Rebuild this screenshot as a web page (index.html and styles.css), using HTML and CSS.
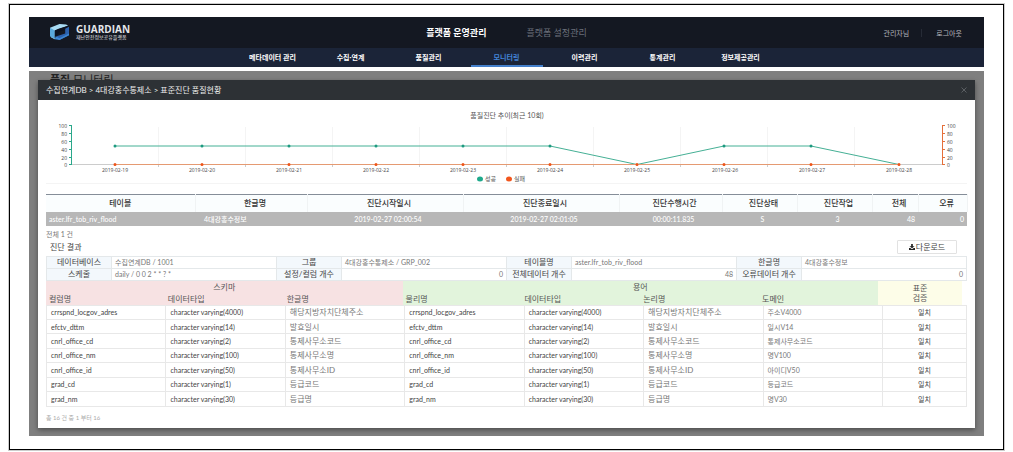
FILE: index.html
```html
<!DOCTYPE html>
<html lang="ko">
<head>
<meta charset="utf-8">
<title>GUARDIAN 품질 모니터링</title>
<link rel="stylesheet" href="styles.css">
</head>
<body>
<div class="frame">
  <header class="top">
    <a class="brand" href="#">
      <svg class="logo" viewBox="0 0 22 20" aria-hidden="true">
        <path d="M1 5 11 1 18 1.500 20 3 10 6 6 8 6 17 2 15Z" fill="#a9dcf5"/>
        <path d="M1 5 6 8 6 17 1 14Z" fill="#5aa9dc"/>
        <path d="M6 8 20 3 20 6 11 9 7 14 6 16Z" fill="#0d1322"/>
        <path d="M17 6 21 4 21 13 11 18 8 16 8 14 17 11Z" fill="#2c62ae"/>
        <path d="M7 14 11 16 21 11 21 13 11 18 6 17Z" fill="#3c86d2"/>
      </svg>
      <span class="brand-text"><strong>GUARDIAN</strong><span>재난안전정보공유플랫폼</span></span>
    </a>
    <nav class="primary">
      <a class="on" href="#">플랫폼 운영관리</a>
      <a href="#">플랫폼 설정관리</a>
    </nav>
    <div class="user"><span>관리자님</span><a href="#">로그아웃</a></div>
  </header>
  <nav class="sub">
    <a href="#">메타데이터 관리</a>
    <a href="#">수집·연계</a>
    <a href="#">품질관리</a>
    <a class="on" href="#">모니터링</a>
    <a href="#">이력관리</a>
    <a href="#">통계관리</a>
    <a href="#">정보제공관리</a>
  </nav>
  <main class="page">
    <h1 class="page-title"><b>품질</b> 모니터링</h1>
    <section class="modal" role="dialog" aria-labelledby="dlg">
      <div class="modal-head">
        <h2 id="dlg">수집연계DB &gt; 4대강홍수통제소 &gt; 표준진단 품질현황</h2>
        <button class="close" type="button" aria-label="닫기">
          <svg viewBox="0 0 6 6"><path d="M0.500 0.500 5.500 5.500M5.500 0.500 0.500 5.500"/></svg>
        </button>
      </div>
      <div class="modal-body">
        <svg class="chart" viewBox="0 0 921 84" role="img" aria-label="품질진단 추이">
          <text class="c-title" x="461" y="18">품질진단 추이(최근 10회)</text>
          <path class="grid" d="M112.500 27V64M199.500 27V64M286.500 27V64M373.500 27V64M460.500 27V64M547.500 27V64M634.500 27V64M721.500 27V64M808.500 27V64M0 83.500H921"/>
          <path class="base" d="M25 64.500H896M112.500 64V67M199.500 64V67M286.500 64V67M373.500 64V67M460.500 64V67M547.500 64V67M634.500 64V67M721.500 64V67M808.500 64V67"/>
          <path class="ax-g" d="M25.500 25V65M23 25.500H25M23 33.500H25M23 41.500H25M23 49.500H25M23 57.500H25M23 64.500H25"/>
          <path class="ax-o" d="M896.500 25V65M897 25.500H899M897 33.500H899M897 41.500H899M897 49.500H899M897 57.500H899M897 64.500H899"/>
          <g class="lab end">
            <text x="21" y="28">100</text><text x="21" y="36">80</text><text x="21" y="44">60</text><text x="21" y="52">40</text><text x="21" y="60">20</text><text x="21" y="67">0</text>
          </g>
          <g class="lab">
            <text x="901" y="28">100</text><text x="901" y="36">80</text><text x="901" y="44">60</text><text x="901" y="52">40</text><text x="901" y="60">20</text><text x="901" y="67">0</text>
          </g>
          <g class="lab mid">
            <text x="69" y="72">2019-02-19</text><text x="156" y="72">2019-02-20</text><text x="243" y="72">2019-02-21</text><text x="330" y="72">2019-02-22</text><text x="417" y="72">2019-02-23</text><text x="504" y="72">2019-02-24</text><text x="591" y="72">2019-02-25</text><text x="679" y="72">2019-02-26</text><text x="766" y="72">2019-02-27</text><text x="853" y="72">2019-02-28</text>
          </g>
          <path class="ok" d="M69 46H504L591 64.500 678 46H765L853 64.500"/>
          <path class="ng" d="M69 64.500H853"/>
          <path class="dots-g" d="M69 46h0M156 46h0M243 46h0M330 46h0M417 46h0M504 46h0M678 46h0M765 46h0"/>
          <path class="dots-o" d="M69 64.500h0M156 64.500h0M243 64.500h0M330 64.500h0M417 64.500h0M504 64.500h0M591 64.500h0M678 64.500h0M765 64.500h0M853 64.500h0"/>
          <ellipse cx="434" cy="79" rx="3" ry="2.500" fill="#1eaa8c"/>
          <text class="leg" x="439" y="81">성공</text>
          <ellipse cx="463" cy="79" rx="3" ry="2.500" fill="#f2561d"/>
          <text class="leg" x="468" y="81">실패</text>
        </svg>

        <table class="runs">
          <colgroup><col class="r1"><col class="r2"><col class="r3"><col class="r3"><col class="r4"><col class="r5"><col class="r5"><col class="r6"><col class="r7"></colgroup>
          <thead><tr><th>테이블</th><th>한글명</th><th>진단시작일시</th><th>진단종료일시</th><th>진단수행시간</th><th>진단상태</th><th>진단작업</th><th>전체</th><th>오류</th></tr></thead>
          <tbody><tr><td class="l first">aster.lfr_tob_riv_flood</td><td class="l">4대강홍수정보</td><td>2019-02-27 02:00:54</td><td>2019-02-27 02:01:05</td><td>00:00:11.835</td><td>S</td><td>3</td><td class="r">48</td><td class="r">0</td></tr></tbody>
        </table>
        <p class="total">전체 1 건</p>
        <div class="result-bar">
          <h3>진단 결과</h3>
          <button class="download" type="button">
            <svg viewBox="0 0 7 7" aria-hidden="true"><path d="M2.500 0H4.500V2.500H6.500L3.500 5 .5 2.500H2.500ZM0 4.800H1.500L3.500 6 5.500 4.800H7V7H0Z"/></svg>다운로드</button>
        </div>

        <table class="info">
          <colgroup><col class="k"><col><col class="k"><col><col class="k"><col><col class="k"><col></colgroup>
          <tbody>
          <tr><th>데이터베이스</th><td>수집연계DB / 1001</td><th>그룹</th><td>4대강홍수통제소 / GRP_002</td><th>테이블명</th><td>aster.lfr_tob_riv_flood</td><th>한글명</th><td>4대강홍수정보</td></tr>
          <tr><th>스케줄</th><td>daily / 0 0 2 * * ? *</td><th>설정/컬럼 개수</th><td class="r">0</td><th>전체데이터 개수</th><td class="r">48</td><th>오류데이터 개수</th><td class="r">0</td></tr>
          </tbody>
        </table>

        <table class="cols head">
          <colgroup><col><col><col><col><col><col><col><col class="v"></colgroup>
          <thead>
          <tr><th class="pink c" colspan="3">스키마</th><th class="green c" colspan="4">용어</th><th class="yellow c" rowspan="2">표준<br>검증</th></tr>
          <tr><th class="pink">컬럼명</th><th class="pink">데이터타입</th><th class="pink">한글명</th><th class="green">물리명</th><th class="green">데이터타입</th><th class="green">논리명</th><th class="green">도메인</th></tr>
          </thead>
        </table>
        <table class="cols body">
          <colgroup><col><col><col><col><col><col><col><col class="v"></colgroup>
          <tbody>
          <tr><td>crrspnd_locgov_adres</td><td>character varying(4000)</td><td class="g">해당지방자치단체주소</td><td>crrspnd_locgov_adres</td><td>character varying(4000)</td><td class="g">해당지방자치단체주소</td><td class="d">주소V4000</td><td class="c">일치</td></tr>
          <tr><td>efctv_dttm</td><td>character varying(14)</td><td class="g">발효일시</td><td>efctv_dttm</td><td>character varying(14)</td><td class="g">발효일시</td><td class="d">일시V14</td><td class="c">일치</td></tr>
          <tr><td>cnrl_office_cd</td><td>character varying(2)</td><td class="g">통제사무소코드</td><td>cnrl_office_cd</td><td>character varying(2)</td><td class="g">통제사무소코드</td><td class="d">통제사무소코드</td><td class="c">일치</td></tr>
          <tr><td>cnrl_office_nm</td><td>character varying(100)</td><td class="g">통제사무소명</td><td>cnrl_office_nm</td><td>character varying(100)</td><td class="g">통제사무소명</td><td class="d">명V100</td><td class="c">일치</td></tr>
          <tr><td>cnrl_office_id</td><td>character varying(50)</td><td class="g">통제사무소ID</td><td>cnrl_office_id</td><td>character varying(50)</td><td class="g">통제사무소ID</td><td class="d">아이디V50</td><td class="c">일치</td></tr>
          <tr><td>grad_cd</td><td>character varying(1)</td><td class="g">등급코드</td><td>grad_cd</td><td>character varying(1)</td><td class="g">등급코드</td><td class="d">등급코드</td><td class="c">일치</td></tr>
          <tr><td>grad_nm</td><td>character varying(30)</td><td class="g">등급명</td><td>grad_nm</td><td>character varying(30)</td><td class="g">등급명</td><td class="d">명V30</td><td class="c">일치</td></tr>
          </tbody>
        </table>
        <p class="paging">총 16 건 중 1 부터 16</p>
      </div>
    </section>
  </main>
</div>
</body>
</html>
```
FILE: styles.css
```css
* { box-sizing: border-box; }
body { margin: 0; padding: 4px 9px 2px; background: #fff; color: #444; font: 8px/12px Lato, "Noto Sans CJK KR", sans-serif; }
h1, h2, h3, p { margin: 0; font-weight: 400; font-size: 8px; }
a { color: inherit; text-decoration: none; }
button { font: inherit; cursor: pointer; }
.frame { border: 1px solid #000; padding: 12px 19px 13px; background: #fff; outline: 1px solid #ccc; }

.top { display: grid; grid-template-columns: 1fr auto 1fr; align-items: center; height: 31px; padding: 0 22px 0 20px; background: #141822; color: #fff; }
.brand { display: flex; align-items: center; gap: 6px; }
.logo { width: 21px; height: 19px; }
.brand-text { display: flex; flex-direction: column; color: #e4e6ea; font-size: 5px; line-height: 6px; }
.brand-text strong { font: 700 10px/9px "Open Sans", sans-serif; }
.primary { display: flex; gap: 40px; padding-left: 2px; font-size: 9px; color: #6d717c; }
.primary .on { color: #fff; font-weight: 700; }
.user { display: flex; justify-content: flex-end; font-size: 7px; color: #b4b7bd; }
.user a { margin-left: 12px; padding-left: 14px; border-left: 1px solid #262b36; line-height: 8px; }
.user span { line-height: 8px; }

.sub { display: flex; justify-content: center; gap: 6px; height: 19px; background: #1b2438; color: #fff; font-size: 7px; font-weight: 700; line-height: 19px; text-align: center; }
.sub a { width: 72px; }
.sub .on { color: #4486d8; box-shadow: inset 0 -2px #4480cc; }

.page { position: relative; margin-top: 4px; padding: 9px 9px 8px; background: #7f7f7f; }
.page-title { position: absolute; top: 2px; left: 21px; font-size: 11px; line-height: 14px; color: #222; }
.modal { position: relative; background: #fff; box-shadow: 0 2px 5px #0006; }
.modal-head { display: flex; align-items: center; justify-content: space-between; height: 20px; padding: 0 8px; background: #2d3135; color: #eee; }
.close { display: flex; padding: 0; border: 0; background: none; }
.close svg { width: 6px; height: 6px; stroke: #7b7f83; stroke-width: 0.600; }
.modal-body { padding: 0 8px 4px; }

.chart { display: block; width: 100%; font-size: 6px; fill: #555; }
.chart path { fill: none; }
.chart .c-title { font-size: 7px; text-anchor: middle; }
.chart .grid { stroke: #f4f4f4; }
.chart .base { stroke: #ccc; }
.chart .ax-g { stroke: #2ba88b; }
.chart .ax-o { stroke: #e5703a; }
.chart .lab { font: 5px "Open Sans", sans-serif; fill: #444; }
.chart .end { text-anchor: end; }
.chart .mid { text-anchor: middle; }
.chart .ok { stroke: #45b095; }
.chart .ng { stroke: #e59a72; }
.chart .dots-g, .chart .dots-o { stroke-width: 3; stroke-linecap: round; }
.chart .dots-g { stroke: #1e9a80; }
.chart .dots-o { stroke: #ee5418; }

table { width: 100%; border-collapse: collapse; table-layout: fixed; }
th, td { padding: 0; overflow: hidden; white-space: nowrap; }
.runs { margin-top: 10px; text-align: center; border-top: 1px solid #858d98; }
.runs th { height: 17px; padding-left: 8px; background: #fafdfe; color: #333; font-weight: 500; border-right: 1px solid #f0f3f4; }
.runs th:first-child { padding-left: 0; }
.runs td { height: 14px; padding: 0 3px 0 9px; background: #b7b7b7; color: #fff; font-size: 7px; font-weight: 500; }
.runs .first { padding-left: 3px; }
.r1 { width: 149px; } .r2 { width: 112px; } .r3 { width: 156px; } .r4 { width: 103px; }
.r5 { width: 75px; } .r6 { width: 46px; } .r7 { width: 49px; }
.runs .l { text-align: left; }
.r, .runs .r { text-align: right; }
.total { margin-top: 2px; color: #777; font-size: 7px; }
.result-bar { display: flex; justify-content: space-between; align-items: center; margin-bottom: 2px; padding: 0 10px 0 4px; }
.download { display: flex; align-items: center; justify-content: center; gap: 1px; width: 60px; height: 14px; padding: 0; border: 1px solid #e2e2e2; border-radius: 1px; background: #fff; color: #444; }
.download svg { width: 6px; height: 6px; fill: #222; }

.info th, .info td { height: 12px; padding: 0 3px; line-height: 11px; border: 1px solid #e4e8ea; }
.info th { padding: 0; background: #f3f8fc; color: #444; font-weight: 400; text-align: center; }
.info td { color: #777; font-size: 7px; }
.info .k { width: 65px; }
.cols .v { width: 84px; }
.cols .c { text-align: center; }
.head { width: calc(100% - 5px); }
.head th { height: 12px; padding: 0 3px; color: #555; font-weight: 400; text-align: left; line-height: 10px; }
.pink { background: #f7e2e3; }
.green { background: #e2f4dc; }
.yellow { background: #fdfde8; }
.body { height: 102px; }
.body td { padding: 0 4px; border: 1px solid #e8e8e8; font-size: 7px; line-height: 12px; color: #444; }
.body .g { color: #777; font-size: 8px; }
.body .d { color: #777; }
.paging { margin-top: 5px; color: #aaa; font-size: 6px; }
```
